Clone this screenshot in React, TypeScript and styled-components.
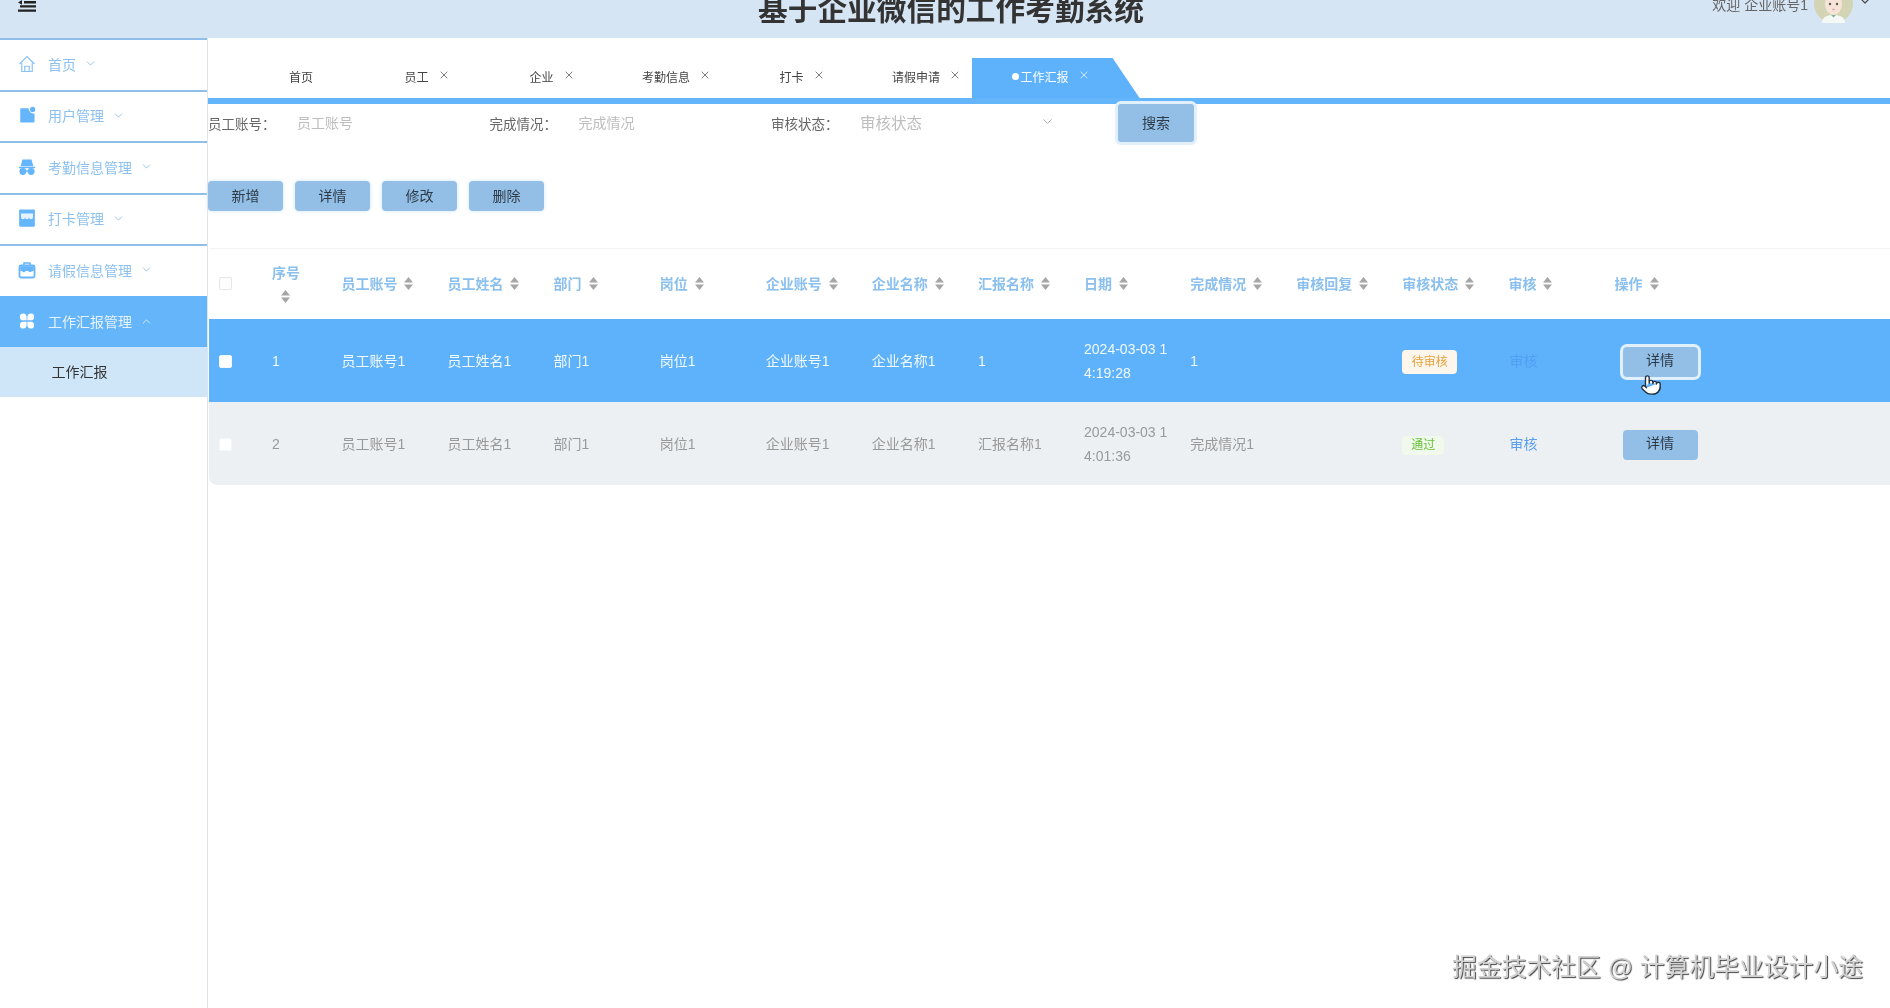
import React, { FC } from "react";
import styled, { createGlobalStyle } from "styled-components";
import { ChevronDown, ChevronUp, Pointer, X } from "lucide-react";

const GlobalStyle = createGlobalStyle`
  html, body {
    margin: 0;
    height: 100%;
    overflow: hidden;
    background: #fff;
    font-family: "Liberation Sans", "Noto Sans CJK SC", sans-serif;
  }
`;

const HomeIcon = () => (
  <svg width="18" height="18" viewBox="0 0 24 24" fill="none" stroke="#8cc3f6" strokeWidth="1.6">
    <path d="M2 12 12 2l10 10" />
    <path d="M5 10v12h14V10" />
    <path d="M9 22v-7h6v7" />
  </svg>
);

const UserIcon = () => (
  <svg width="18" height="18" viewBox="0 0 24 24" fill="#65b5fb">
    <path d="M4 3h10a7 7 0 0 0 8 7v11a1 1 0 0 1-1 1H4a1 1 0 0 1-1-1V4a1 1 0 0 1 1-1z" />
    <circle cx="19.5" cy="4.5" r="3.5" />
  </svg>
);

const HatIcon = () => (
  <svg width="18" height="18" viewBox="0 0 24 24" fill="#65b5fb">
    <path d="M6 2h12l2.5 9h-17z" />
    <rect x="1" y="11.5" width="22" height="2" rx="1" />
    <circle cx="6.5" cy="18" r="4.6" />
    <circle cx="17.5" cy="18" r="4.6" />
    <rect x="10" y="16.5" width="4" height="2" />
  </svg>
);

const StoreIcon = () => (
  <svg width="18" height="18" viewBox="0 0 24 24">
    <rect x="1.5" y="0.5" width="21" height="23" rx="1.5" fill="#65b5fb" />
    <path d="M4 6h16v5a2.67 2.67 0 0 1-5.33 0 2.67 2.67 0 0 1-5.34 0A2.67 2.67 0 0 1 4 11z" fill="#e6f3fe" />
  </svg>
);

const CaseIcon = () => (
  <svg width="18" height="18" viewBox="0 0 24 24" fill="none">
    <path d="M8 6V2.5h8V6" stroke="#65b5fb" strokeWidth="2" />
    <rect x="2" y="6" width="20" height="16" rx="2" stroke="#65b5fb" strokeWidth="2.4" fill="#fff" />
    <path d="M3 7h18v6l-3 1a2.5 2.5 0 0 1-3.5 0l-2.5-1-2.5 1a2.5 2.5 0 0 1-3.5 0l-3-1z" fill="#65b5fb" />
  </svg>
);

const PetalIcon = () => (
  <svg width="18" height="18" viewBox="0 0 24 24" fill="#fff">
    <path d="M7 2a5 5 0 0 1 4.5 5v4H7A4.5 4.5 0 0 1 7 2z" />
    <path d="M17 2a5 5 0 0 0-4.5 5v4H17a4.5 4.5 0 0 0 0-9z" />
    <path d="M7 22a5 5 0 0 0 4.5-5v-4H7a4.5 4.5 0 0 0 0 9z" />
    <path d="M17 22a5 5 0 0 1-4.5-5v-4H17a4.5 4.5 0 0 1 0 9z" />
  </svg>
);

const MenuGlyph = () => (
  <svg width="18" height="12" viewBox="0 0 18 12" fill="none" stroke="#222" strokeWidth="2.4">
    <path d="M6 2.2h12M2 6.4h16M0 10.6h18" />
    <path d="M4 0 0 2.4l4 2.4z" fill="#222" stroke="none" />
  </svg>
);

const AvatarArt = () => (
  <svg width="39" height="39" viewBox="0 0 39 39">
    <circle cx="19.5" cy="19.5" r="19.5" fill="#d3d4b4" />
    <ellipse cx="19.5" cy="20" rx="8.5" ry="11" fill="#f6e4d8" />
    <circle cx="16" cy="20" r="1.2" fill="#5a5a4e" />
    <circle cx="23" cy="20" r="1.2" fill="#5a5a4e" />
    <ellipse cx="19.5" cy="25.5" rx="1.6" ry="0.8" fill="#e0a9a0" />
    <path d="M8 39c0-6 5-8 11.5-8S31 33 31 39z" fill="#f4f9f6" />
    <path d="M17 31l2.5 2.5L22 31z" fill="#7fb39a" />
  </svg>
);

const SortIcon = () => (
  <svg width="9" height="13" viewBox="0 0 9 13" fill="#a6a6a6">
    <path d="M4.5 0 9 5.4H0z" />
    <path d="M4.5 13 0 7.6h9z" />
  </svg>
);

const menus = [
  { label: "首页", icon: <HomeIcon /> },
  { label: "用户管理", icon: <UserIcon /> },
  { label: "考勤信息管理", icon: <HatIcon /> },
  { label: "打卡管理", icon: <StoreIcon /> },
  { label: "请假信息管理", icon: <CaseIcon /> },
];

const tabs = [
  { label: "首页", width: 115.6, closable: false },
  { label: "员工", width: 125, closable: true },
  { label: "企业", width: 112.5, closable: true },
  { label: "考勤信息", width: 137.5, closable: true },
  { label: "打卡", width: 112.5, closable: true },
  { label: "请假申请", width: 79.5, closable: true },
];

const columns = [
  "员工账号",
  "员工姓名",
  "部门",
  "岗位",
  "企业账号",
  "企业名称",
  "汇报名称",
  "日期",
  "完成情况",
  "审核回复",
  "审核状态",
  "审核",
  "操作",
];

const rows = [
  {
    no: "1",
    cells: ["员工账号1", "员工姓名1", "部门1", "岗位1", "企业账号1", "企业名称1", "1", "2024-03-03 14:19:28", "1", ""],
    pending: true,
  },
  {
    no: "2",
    cells: ["员工账号1", "员工姓名1", "部门1", "岗位1", "企业账号1", "企业名称1", "汇报名称1", "2024-03-03 14:01:36", "完成情况1", ""],
    pending: false,
  },
];

const App: FC = () => (
  <>
    <GlobalStyle />
    <Page>
      <Header>
        <MenuToggle>
          <MenuGlyph />
        </MenuToggle>
        <Title>基于企业微信的工作考勤系统</Title>
        <UserBlock>
          <Welcome>欢迎 企业账号1</Welcome>
          <AvatarArt />
          <UserCaret>
            <ChevronDown size={16} strokeWidth={1.8} color="#4a4a4a" />
          </UserCaret>
        </UserBlock>
      </Header>

      <Body>
        <Sidebar>
          {menus.map((m) => (
            <MenuItem key={m.label}>
              {m.icon}
              <span>{m.label}</span>
              <ChevronDown size={13} strokeWidth={1.6} color="#8fbcdf" />
            </MenuItem>
          ))}
          <MenuItem $active>
            <PetalIcon />
            <span>工作汇报管理</span>
            <ChevronUp size={13} strokeWidth={1.6} color="#e3f1fe" />
          </MenuItem>
          <SubMenuItem>工作汇报</SubMenuItem>
        </Sidebar>

        <Main>
          <TabStrip>
            {tabs.map((t) => (
              <Tab key={t.label} $width={t.width}>
                {t.label}
                {t.closable && (
                  <CloseMark>
                    <X size={12} strokeWidth={1.4} />
                  </CloseMark>
                )}
              </Tab>
            ))}
            <ActiveTab>
              <Dot />
              工作汇报
              <CloseMark>
                <X size={12} strokeWidth={1.4} />
              </CloseMark>
            </ActiveTab>
          </TabStrip>

          <SearchRow>
            <Field>
              <FieldLabel>员工账号：</FieldLabel>
              <Placeholder>员工账号</Placeholder>
            </Field>
            <Field>
              <FieldLabel>完成情况：</FieldLabel>
              <Placeholder>完成情况</Placeholder>
            </Field>
            <FieldLabel>审核状态：</FieldLabel>
            <SelectBox>
              审核状态
              <ChevronDown size={15} strokeWidth={1.5} color="#a8a8a8" />
            </SelectBox>
            <SearchButton>搜索</SearchButton>
          </SearchRow>

          <ActionRow>
            <ActionButton>新增</ActionButton>
            <ActionButton>详情</ActionButton>
            <ActionButton>修改</ActionButton>
            <ActionButton>删除</ActionButton>
          </ActionRow>

          <Table>
            <HeadRow>
              <CheckCell>
                <CheckBox />
              </CheckCell>
              <NoHead>
                序号
                <SortIcon />
              </NoHead>
              {columns.map((c) => (
                <HeadCell key={c}>
                  {c}
                  <SortIcon />
                </HeadCell>
              ))}
            </HeadRow>

            {rows.map((r, i) => (
              <DataRow key={r.no} $active={i === 0}>
                <CheckCell>
                  <CheckBox $solid />
                </CheckCell>
                <Cell>{r.no}</Cell>
                {r.cells.map((c, j) => (
                  <Cell key={j}>{c}</Cell>
                ))}
                <Cell>{r.pending ? <PendingTag>待审核</PendingTag> : <PassTag>通过</PassTag>}</Cell>
                <Cell>
                  <AuditLink $active={i === 0}>审核</AuditLink>
                </Cell>
                <Cell>
                  <DetailButton $focus={i === 0}>
                    详情
                    {i === 0 && (
                      <HandCursor>
                        <Pointer size={22} strokeWidth={1.5} fill="#fff" color="#22303c" />
                      </HandCursor>
                    )}
                  </DetailButton>
                </Cell>
              </DataRow>
            ))}
          </Table>
        </Main>
      </Body>

      <Watermark>掘金技术社区 @ 计算机毕业设计小途</Watermark>
    </Page>
  </>
);

export default App;

const Page = styled.div`
  position: relative;
  width: 1890px;
  height: 1008px;
  overflow: hidden;
  filter: blur(0.5px);
`;

const Header = styled.header`
  display: grid;
  grid-template-columns: 1fr auto 1fr;
  height: 38px;
  padding: 0 6px 0 18px;
  background: #d6e5f4;
  overflow: hidden;
`;

const MenuToggle = styled.div`
  line-height: 0;
`;

const Title = styled.h1`
  margin: -2px 0 0;
  font-size: 29.7px;
  line-height: 24px;
  font-weight: 700;
  color: #333;
`;

const UserBlock = styled.div`
  display: flex;
  align-items: center;
  justify-content: flex-end;
  gap: 6px;
  height: 39px;
  margin: -16px 11px 0 0;
`;

const UserCaret = styled.span`
  display: inline-flex;
  margin: -6px 0 0 -2px;
`;

const Welcome = styled.span`
  font-size: 14px;
  color: #666;
`;

const Body = styled.div`
  display: flex;
  height: 970px;
`;

const Sidebar = styled.aside`
  flex: none;
  width: 208px;
  box-sizing: border-box;
  border-right: 1px solid #dfe4e9;
  background: #fff;
`;

const MenuItem = styled.div<{ $active?: boolean }>`
  display: flex;
  align-items: center;
  height: 51.5px;
  box-sizing: border-box;
  padding: 0 0 2px 18px;
  border-top: 2px solid ${(p) => (p.$active ? "#65b5fb" : "#8fbfe8")};
  background: ${(p) => (p.$active ? "#65b5fb" : "#fff")};
  color: ${(p) => (p.$active ? "#e6f3fe" : "#8cc1ef")};
  font-size: 14px;

  span {
    margin: 0 8px 0 12px;
  }
`;

const SubMenuItem = styled.div`
  height: 49.5px;
  padding-left: 51.5px;
  line-height: 51px;
  font-size: 14px;
  color: #333;
  background: #cfe6f9;
`;

const Main = styled.main`
  flex: 1;
  min-width: 0;
  background: #fff;
`;

const TabStrip = styled.div`
  display: flex;
  align-items: flex-end;
  height: 66px;
  box-sizing: border-box;
  padding-left: 81px;
  border-bottom: 6px solid #65b5fb;
`;

const Tab = styled.div<{ $width: number }>`
  display: flex;
  align-items: center;
  flex: none;
  width: ${(p) => p.$width}px;
  height: 40px;
  box-sizing: border-box;
  padding-bottom: 3px;
  font-size: 12px;
  color: #444;
`;

const CloseMark = styled.span`
  display: inline-flex;
  margin: -4px 0 0 9px;
`;

const ActiveTab = styled.div`
  display: flex;
  align-items: center;
  flex: none;
  width: 168px;
  height: 40px;
  box-sizing: border-box;
  padding: 0 0 3px 40px;
  font-size: 12px;
  color: #fff;
  background: #5eb2fb;
  clip-path: polygon(0 0, 141px 0, 168px 100%, 0 100%);
`;

const Dot = styled.i`
  width: 7px;
  height: 7px;
  margin-right: 2px;
  border-radius: 50%;
  background: #fff;
`;

const SearchRow = styled.div`
  display: flex;
  align-items: center;
  height: 37px;
`;

const Field = styled.div`
  display: flex;
  align-items: center;
  flex: none;
  width: 281.5px;
`;

const FieldLabel = styled.label`
  flex: none;
  width: 89px;
  font-size: 13.5px;
  color: #666;
`;

const Placeholder = styled.span`
  padding-bottom: 2px;
  font-size: 14px;
  color: #bdbdbd;
`;

const SelectBox = styled.div`
  display: flex;
  align-items: center;
  justify-content: space-between;
  flex: none;
  width: 195px;
  padding-bottom: 2px;
  font-size: 15.5px;
  color: #bdbdbd;
`;

const SearchButton = styled.button`
  position: relative;
  align-self: flex-start;
  flex: none;
  width: 76px;
  height: 38px;
  margin-left: 63px;
  padding: 0 0 3px;
  border: none;
  border-radius: 3px;
  background: #93bfe6;
  box-shadow: 0 0 0 3px #e1f0fc;
  font: inherit;
  font-size: 14px;
  color: #2d3b48;
`;

const ActionRow = styled.div`
  display: flex;
  gap: 12px;
  margin-top: 40px;
`;

const ActionButton = styled.button`
  width: 75px;
  height: 30px;
  padding: 0 0 2px;
  border: none;
  border-radius: 4px;
  background: #93bfe6;
  box-shadow: 0 0 4px #cfe6fa;
  font: inherit;
  font-size: 14px;
  color: #2d3b48;
`;

const Table = styled.div`
  margin: 37px 0 0 1px;
`;

const rowGrid = `
  display: grid;
  grid-template-columns: 63px 69.4px repeat(12, 106.1px) 1fr;
  align-items: center;
`;

const HeadRow = styled.div`
  ${rowGrid}
  height: 71px;
  padding-bottom: 2px;
  border-top: 1px solid #f2f3f4;
  box-sizing: border-box;
`;

const DataRow = styled.div<{ $active: boolean }>`
  ${rowGrid}
  height: 83px;
  box-sizing: border-box;
  padding-top: 2px;
  background: ${(p) => (p.$active ? "#5eb2fb" : "#ecf0f3")};
  color: ${(p) => (p.$active ? "#f2f9ff" : "#999")};
  border-radius: ${(p) => (p.$active ? "0" : "0 0 0 8px")};
`;

const CheckCell = styled.div`
  display: flex;
  padding-left: 9.5px;
`;

const CheckBox = styled.i<{ $solid?: boolean }>`
  display: block;
  width: 13px;
  height: 13px;
  box-sizing: border-box;
  border: 1px solid ${(p) => (p.$solid ? "#f4f7f9" : "#e4e6e9")};
  border-radius: 2px;
  background: ${(p) => (p.$solid ? "#fff" : "#fdfdfd")};
`;

const HeadCell = styled.div`
  display: flex;
  align-items: center;
  gap: 7px;
  font-size: 14px;
  font-weight: 700;
  color: #8abfee;
`;

const NoHead = styled(HeadCell)`
  flex-direction: column;
  align-items: center;
  width: 28px;
  gap: 8px;
  margin-top: -2px;

  svg {
    margin-left: -2px;
  }
`;

const Cell = styled.div`
  padding-right: 20px;
  font-size: 14px;
  line-height: 23.5px;
  word-break: break-all;
`;

const PendingTag = styled.span`
  display: inline-block;
  width: 55px;
  height: 24px;
  line-height: 24px;
  text-align: center;
  border-radius: 4px;
  font-size: 12px;
  background: #fdf6ec;
  color: #e6a23c;
`;

const PassTag = styled.span`
  display: inline-block;
  width: 42px;
  height: 19px;
  line-height: 19px;
  text-align: center;
  border-radius: 4px;
  font-size: 12px;
  background: #f0f9eb;
  color: #67c23a;
`;

const AuditLink = styled.span<{ $active: boolean }>`
  padding-left: 1px;
  color: ${(p) => (p.$active ? "#4f9ff2" : "#5b9fec")};
`;

const DetailButton = styled.button<{ $focus: boolean }>`
  position: relative;
  display: block;
  width: 75px;
  height: 30px;
  margin-left: 8px;
  padding: 0 0 2px;
  border: none;
  border-radius: 4px;
  background: #93bfe6;
  box-shadow: ${(p) => (p.$focus ? "0 0 0 3px #e0f0fc" : "none")};
  font: inherit;
  font-size: 14px;
  color: #2d3b48;
`;

const HandCursor = styled.span`
  position: absolute;
  left: 17px;
  top: 27px;
  line-height: 0;
`;

const Watermark = styled.div`
  position: absolute;
  right: 27px;
  top: 954px;
  font-size: 24.8px;
  line-height: 28px;
  white-space: nowrap;
  color: #d2d2d2;
  text-shadow: 1px 1px 1px #444;
`;
